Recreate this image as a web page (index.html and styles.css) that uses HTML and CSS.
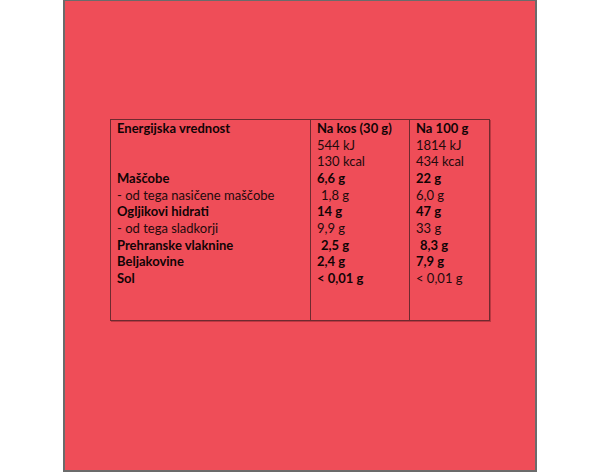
FILE: index.html
```html
<!DOCTYPE html>
<html lang="sl">
<head>
<meta charset="utf-8">
<title>Hranilne vrednosti</title>
<link rel="stylesheet" href="styles.css">
</head>
<body>
<div class="panel">
  <table class="nutri">
    <colgroup><col class="c1"><col class="c2"><col class="c3"></colgroup>
    <tr class="b"><td>Energijska vrednost</td><td>Na kos (30 g)</td><td>Na 100 g</td></tr>
    <tr><td></td><td>544 kJ</td><td>1814 kJ</td></tr>
    <tr><td></td><td>130 kcal</td><td>434 kcal</td></tr>
    <tr class="b"><td>Maščobe</td><td>6,6 g</td><td>22 g</td></tr>
    <tr><td>- od tega nasičene maščobe</td><td><span class="ind">1,8 g</span></td><td>6,0 g</td></tr>
    <tr class="b"><td>Ogljikovi hidrati</td><td>14 g</td><td>47 g</td></tr>
    <tr><td>- od tega sladkorji</td><td>9,9 g</td><td>33 g</td></tr>
    <tr class="b"><td>Prehranske vlaknine</td><td><span class="ind">2,5 g</span></td><td><span class="ind">8,3 g</span></td></tr>
    <tr class="b"><td>Beljakovine</td><td>2,4 g</td><td>7,9 g</td></tr>
    <tr class="b"><td>Sol</td><td>&lt; 0,01 g</td><td class="n">&lt; 0,01 g</td></tr>
    <tr><td></td><td></td><td></td></tr>
    <tr><td></td><td></td><td></td></tr>
  </table>
</div>
</body>
</html>
```
FILE: styles.css
```css
html, body {
  margin: 0;
  padding: 0;
  background: #ffffff;
}
body {
  font-family: Lato, "Open Sans", "Liberation Sans", sans-serif;
}
.panel {
  box-sizing: border-box;
  width: 474px;
  height: 472px;
  margin: 0 auto;
  border: 1px solid #6b6b6b;
  border-width: 1px 2px 2px 2px;
  background: #ef4d58;
  padding-top: 118px;
  display: flex;
  justify-content: center;
  align-items: flex-start;
}
.nutri {
  border-collapse: collapse;
  table-layout: fixed;
  width: 379px;
  border: 1px solid #6e2a2f;
  box-shadow: 1px 1px 0 rgba(90, 20, 25, 0.35);
  color: #220a0c;
  font-size: 13px;
}
.c1 { width: 200px; }
.c2 { width: 99px; }
.c3 { width: 80px; }
.nutri td {
  border-left: 1px solid #6e2a2f;
  border-right: 1px solid #6e2a2f;
  padding: 0 6px;
  height: 16.67px;
  line-height: 16.67px;
  white-space: nowrap;
  vertical-align: top;
}
.b td {
  font-weight: 700;
  color: #110405;
}
.b td.n {
  font-weight: 400;
  color: #220a0c;
}
.ind {
  padding-left: 4px;
}
```
